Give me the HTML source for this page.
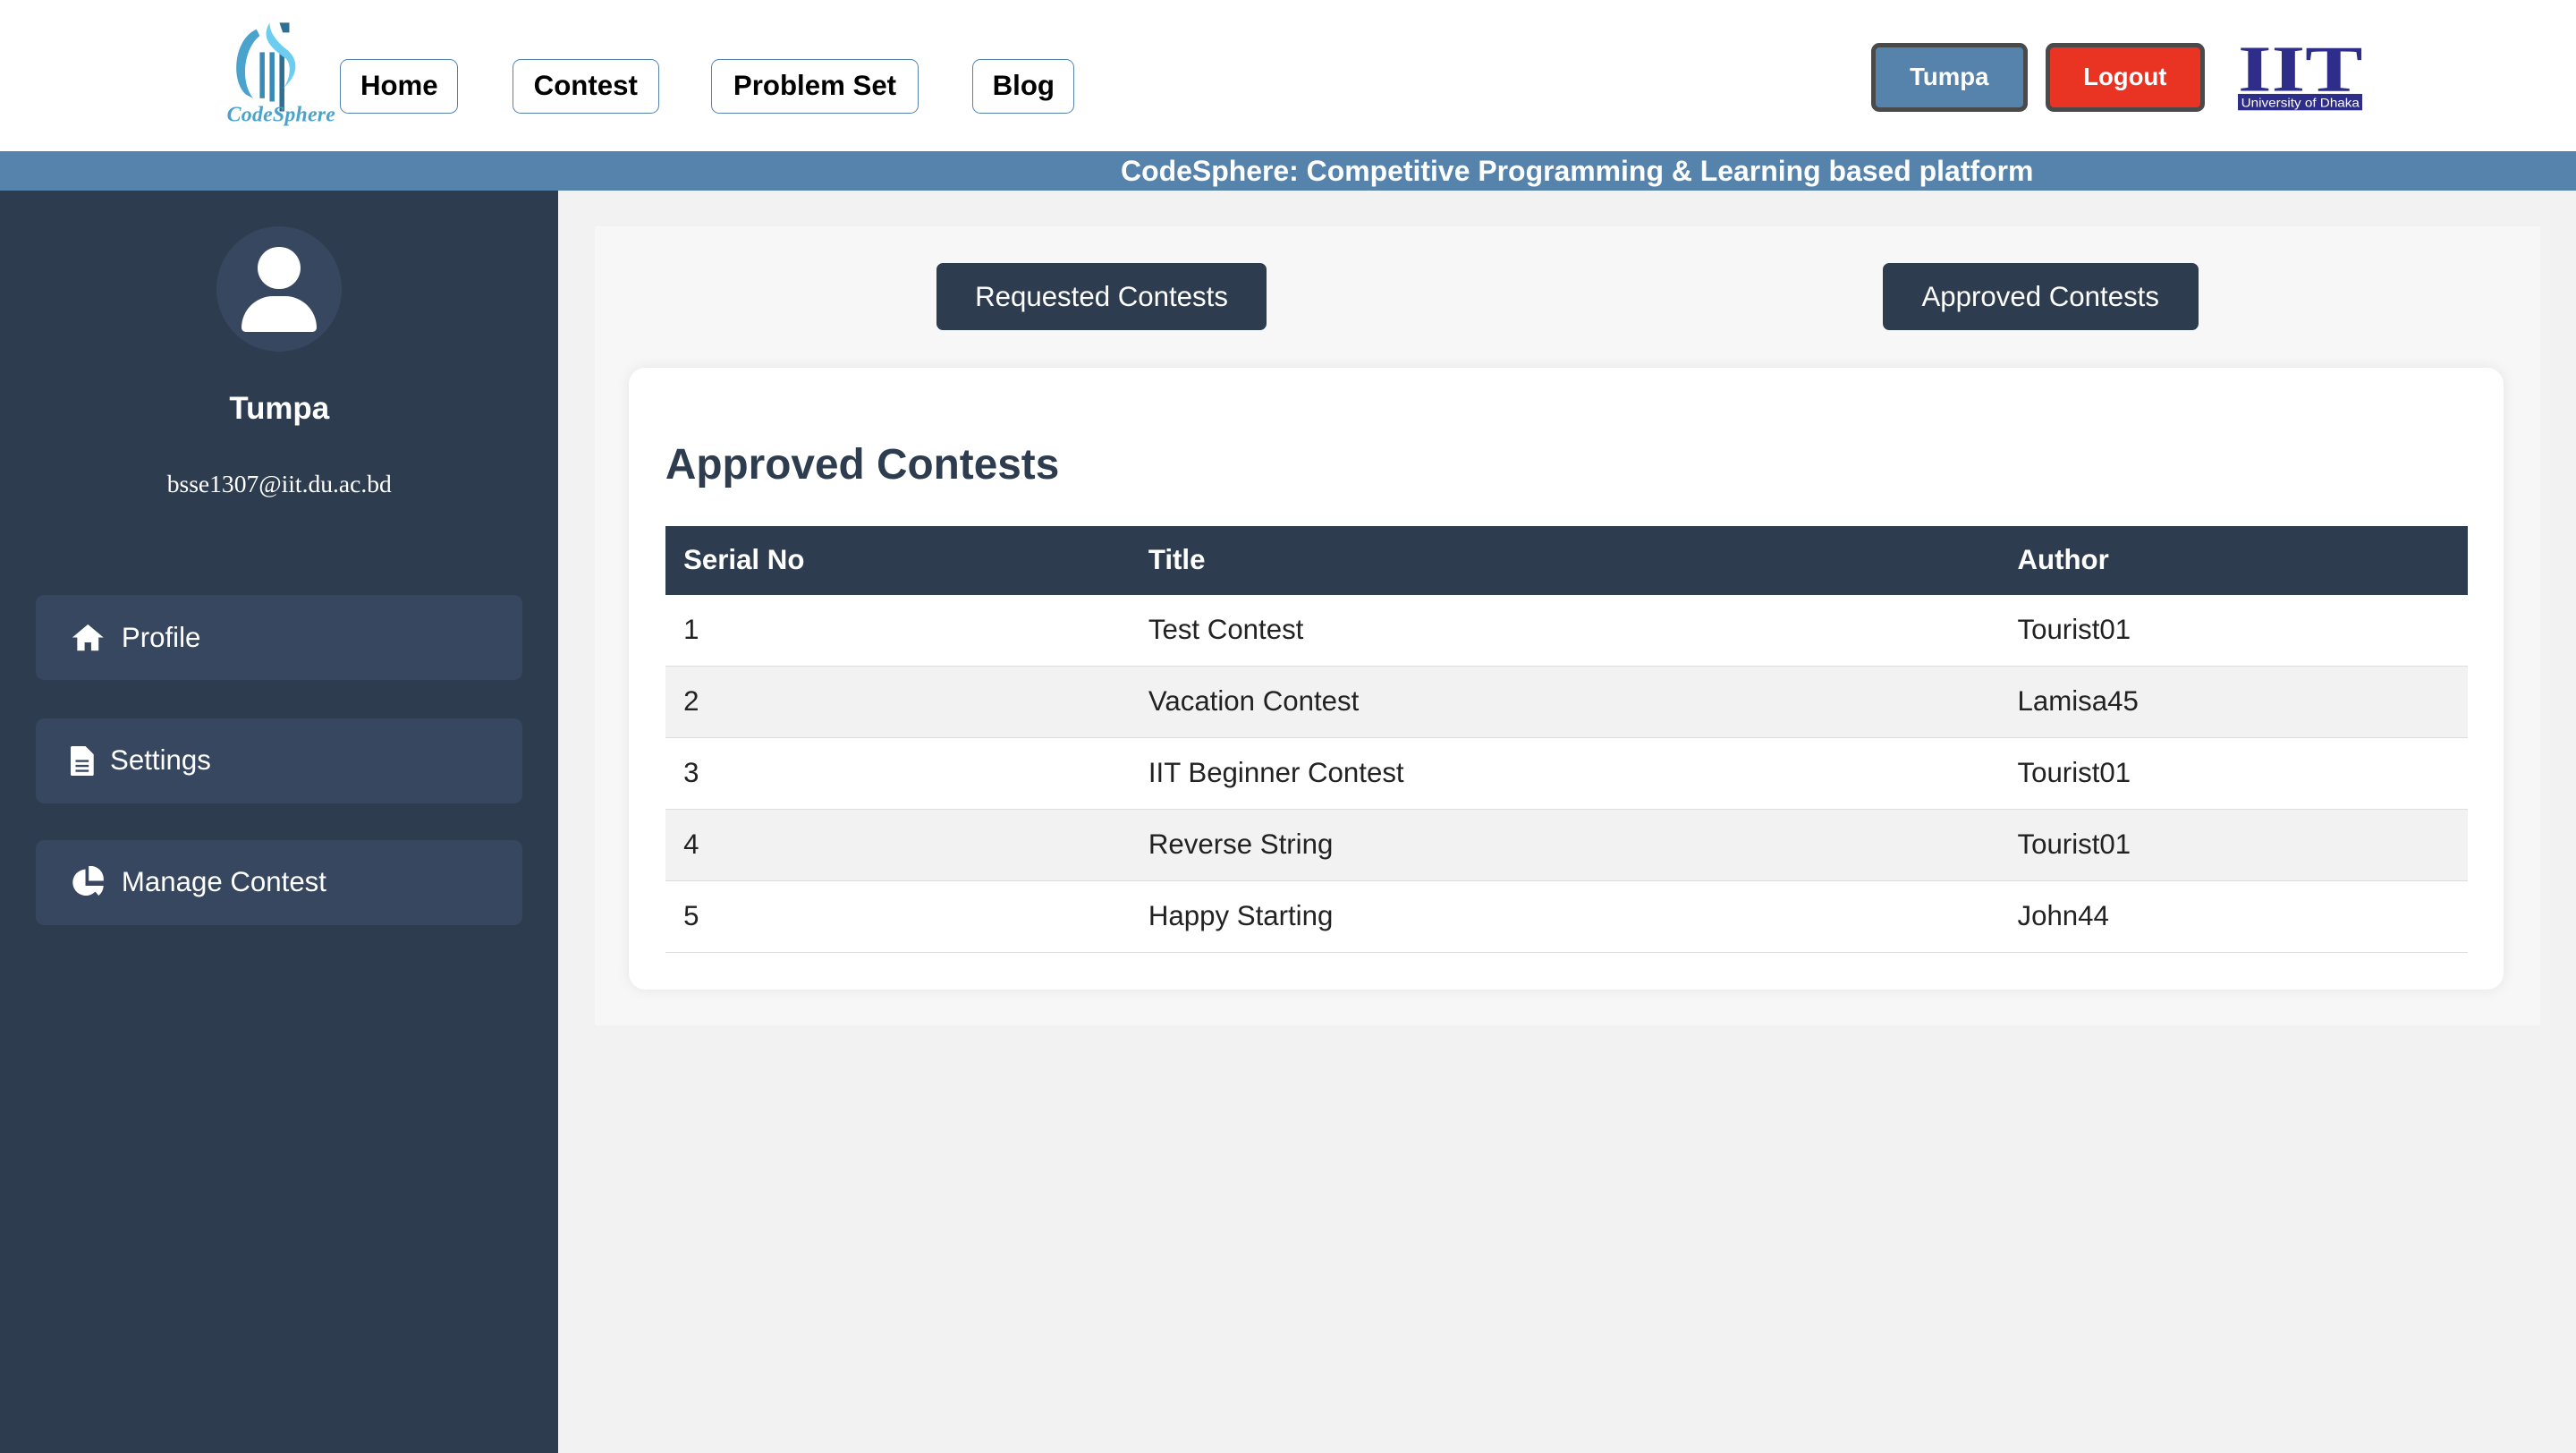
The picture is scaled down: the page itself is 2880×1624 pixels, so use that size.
<!DOCTYPE html>
<html><head><meta charset="utf-8"><style>
html,body{margin:0;padding:0;}
body{width:1568px;height:884px;zoom:1.83673;overflow:hidden;background:#f2f2f2;font-family:"Liberation Sans",sans-serif;position:relative;}
.abs{position:absolute;}
.nav{position:absolute;top:36px;border:1px solid #5683ab;border-radius:5px;background:#fff;font-weight:bold;font-size:17px;color:#000;display:flex;align-items:center;justify-content:center;box-sizing:border-box;height:33px;}
.hb{position:absolute;top:26px;height:42px;border:3px solid #4a4a4a;border-radius:5px;box-sizing:border-box;color:#fff;font-weight:bold;font-size:15px;display:flex;align-items:center;justify-content:center;}
.mi{position:absolute;left:22px;width:296px;height:52px;background:#36475f;border-radius:5px;color:#fff;font-size:17px;display:flex;align-items:center;}
.btn{position:absolute;top:160px;height:41px;background:#2e3c4f;border-radius:4px;color:#fff;font-size:17px;display:flex;align-items:center;justify-content:center;}
table{border-collapse:collapse;width:1097px;font-size:17px;color:#222;}
th{background:#2e3c4f;color:#fff;text-align:left;height:42px;padding:0 0 0 11px;font-size:17px;}
td{height:43px;padding:0 0 0 11px;border-bottom:1px solid #ddd;}
tr.alt td{background:#f2f2f2;}
</style></head><body>
<div class="abs" style="left:0;top:0;width:1568px;height:92px;background:#fff;"></div>
<svg class="abs" style="left:136px;top:10px" width="72" height="72" viewBox="0 0 72 72">
<path d="M20 8 C6 14 4 40 14 48 L18 50 C10 40 12 20 22 12Z" fill="#4aa3cc"/>
<rect x="22" y="22" width="3" height="28" fill="#3a8ab8"/><rect x="28" y="22" width="3" height="30" fill="#3a8ab8"/><rect x="34" y="22" width="3" height="36" fill="#2f6f94"/>
<path d="M28 4 C22 14 30 20 38 26 C42 30 40 40 36 44 C46 36 46 26 38 20 C32 15 28 10 28 4Z" fill="#6dcdf0"/>
<path d="M34 4 L40 4 L40 10 L36 10Z" fill="#2f6f94"/>
<text x="2" y="64" font-family="Liberation Serif,serif" font-style="italic" font-weight="bold" font-size="13" fill="#4aa3cc" textLength="66">CodeSphere</text>
</svg>
<div class="nav" style="left:207px;width:72px;">Home</div>
<div class="nav" style="left:312px;width:89px;">Contest</div>
<div class="nav" style="left:433px;width:126px;">Problem Set</div>
<div class="nav" style="left:592px;width:62px;">Blog</div>
<div class="hb" style="left:1139px;width:95px;background:#5683ab;">Tumpa</div>
<div class="hb" style="left:1245px;width:97px;background:#e93323;">Logout</div>
<svg class="abs" style="left:1362px;top:26px" width="76" height="42" viewBox="0 0 76 42">
<text x="0" y="29" font-family="Liberation Serif,serif" font-weight="bold" font-size="40" fill="#2e2e8a" textLength="76" lengthAdjust="spacingAndGlyphs">IIT</text>
<rect x="0" y="31" width="76" height="10" fill="#2e2e8a"/>
<text x="38" y="39" text-anchor="middle" font-family="Liberation Sans,sans-serif" font-size="7.5" fill="#fff" textLength="72" lengthAdjust="spacingAndGlyphs">University of Dhaka</text>
</svg>
<div class="abs" style="left:0;top:92px;width:1568px;height:24px;background:#5683ab;color:#fff;font-weight:bold;font-size:17.4px;line-height:24px;text-align:center;padding-left:352px;box-sizing:border-box;">CodeSphere: Competitive Programming &amp; Learning based platform</div>
<div class="abs" style="left:0;top:116px;width:340px;height:768px;background:#2e3c4f;"></div>
<div class="abs" style="left:132px;top:138px;width:76px;height:76px;border-radius:50%;background:#36475f;"></div>
<div class="abs" style="left:157px;top:150px;width:26px;height:26px;border-radius:50%;background:#fff;"></div>
<div class="abs" style="left:147px;top:180px;width:46px;height:22px;border-radius:23px 23px 3px 3px;background:#fff;"></div>
<div class="abs" style="left:0;top:238px;width:340px;text-align:center;color:#fff;font-weight:bold;font-size:19px;">Tumpa</div>
<div class="abs" style="left:0;top:286px;width:340px;text-align:center;color:#fff;font-family:'Liberation Serif',serif;font-size:15px;">bsse1307@iit.du.ac.bd</div>
<div class="mi" style="top:362px;"><svg style="margin:0 10px 0 21px" width="21" height="18" viewBox="0 0 21 18"><path d="M10.5 1 L20 9 L17 9 L17 17 L12.5 17 L12.5 12 L8.5 12 L8.5 17 L4 17 L4 9 L1 9Z" fill="#fff"/></svg>Profile</div>
<div class="mi" style="top:437px;"><svg style="margin:0 10px 0 21px" width="14" height="18" viewBox="0 0 14 18"><path d="M0 1 Q0 0 1 0 L9 0 L14 5 L14 17 Q14 18 13 18 L1 18 Q0 18 0 17Z" fill="#fff"/><path d="M3 9h8M3 12h8M3 15h8" stroke="#36475f" stroke-width="1.3"/></svg>Settings</div>
<div class="mi" style="top:511px;"><svg style="margin:0 10px 0 21px" width="21" height="20" viewBox="0 0 21 20"><path d="M9 2 A8 8 0 1 0 17 12 L9 12Z" fill="#fff"/><path d="M11 0 A8 8 0 0 1 20 9 L11 9Z" fill="#fff"/><path d="M12 12 L20 12 A8 8 0 0 1 17 18Z" fill="#fff"/></svg>Manage Contest</div>
<div class="abs" style="left:362px;top:138px;width:1184px;height:486px;background:#f7f7f7;"></div>
<div class="btn" style="left:570px;width:201px;">Requested Contests</div>
<div class="btn" style="left:1146px;width:192px;">Approved Contests</div>
<div class="abs" style="left:383px;top:224px;width:1141px;height:378px;background:#fff;border-radius:10px;box-shadow:0 0 8px rgba(0,0,0,0.08);">
<div style="position:absolute;left:22px;top:44px;font-size:26px;font-weight:bold;color:#2e3c4f;">Approved Contests</div>
<table style="position:absolute;left:22px;top:96px;">
<tr><th style="width:272px">Serial No</th><th style="width:518px">Title</th><th>Author</th></tr>
<tr><td>1</td><td>Test Contest</td><td>Tourist01</td></tr>
<tr class="alt"><td>2</td><td>Vacation Contest</td><td>Lamisa45</td></tr>
<tr><td>3</td><td>IIT Beginner Contest</td><td>Tourist01</td></tr>
<tr class="alt"><td>4</td><td>Reverse String</td><td>Tourist01</td></tr>
<tr><td>5</td><td>Happy Starting</td><td>John44</td></tr>
</table></div>
</body></html>
